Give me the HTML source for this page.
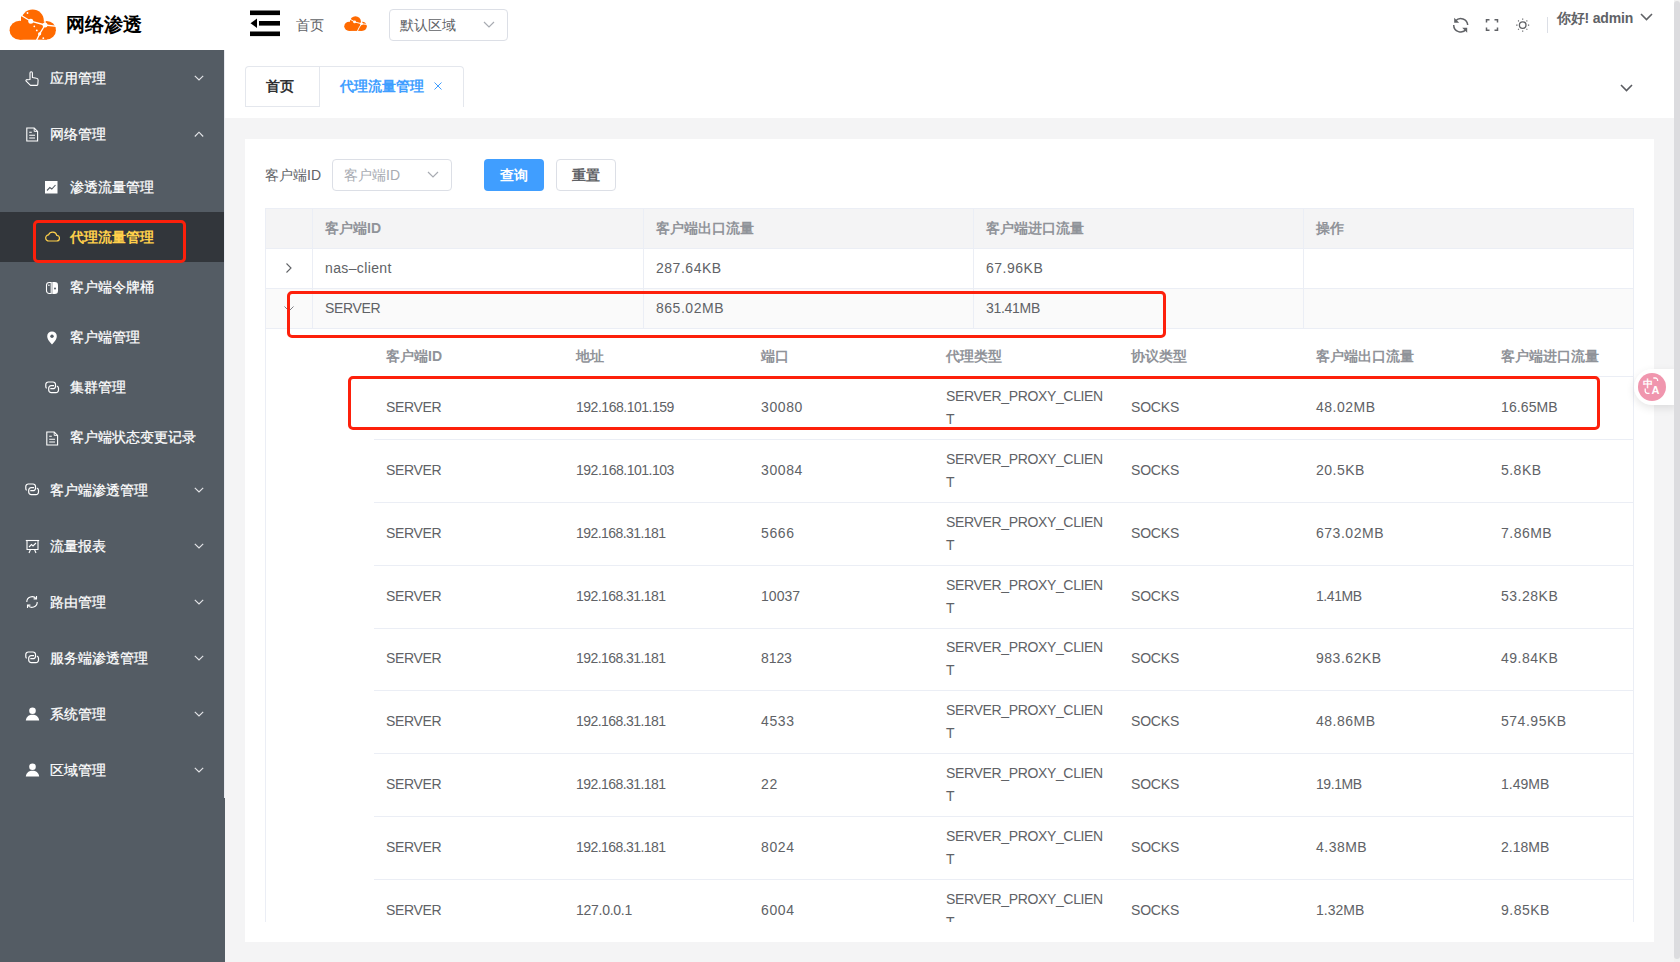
<!DOCTYPE html>
<html><head><meta charset="utf-8">
<style>
*{box-sizing:border-box;margin:0;padding:0}
html,body{width:1680px;height:962px;overflow:hidden;background:#fff}
body{position:relative;font-family:"Liberation Sans",sans-serif;font-size:14px;color:#606266}
.a{position:absolute}
.t{position:absolute;white-space:nowrap;line-height:23px}
/* header */
#hdr{left:0;top:0;width:1680px;height:50px;background:#fff}
#logo-t{left:66px;top:13px;font-size:18.5px;font-weight:bold;color:#000;line-height:24px}
/* sidebar */
#side{left:0;top:50px;width:225px;height:912px;background:#545c64}
#menu{left:0;top:50px;width:225px;height:748px;background:#545c64;border-right:1px solid #e8eaf0}
.mi{position:absolute;left:0;width:224px;color:#fff}
.mi .tx{position:absolute;left:50px;line-height:23px;white-space:nowrap}
.si .tx{left:70px}
.chev{position:absolute;left:193px;width:10px;height:6px}
#active{left:0;top:212px;width:224px;height:50px;background:#32363b}
/* content */
#main{left:225px;top:118px;width:1449px;height:844px;background:#f4f4f5}
#card{left:245px;top:139px;width:1409px;height:803px;background:#fff}
.tbl-line{position:absolute;background:#ebeef5}
.hd{font-weight:bold;color:#909399}
.redbox{position:absolute;border:3px solid #fd200b;border-radius:5px}
#sb{left:1674px;top:0;width:6px;height:962px;background:#f1f1f1}
#sbt{left:1674px;top:1px;width:6px;height:958px;background:#dcdcdf;border-radius:3px}
</style></head><body>
<div id="hdr" class="a"></div>
<!-- logo cloud -->
<svg class="a" style="left:5px;top:5px" width="56" height="40" viewBox="0 0 56 40">
  <g fill="#ff6a00">
    <ellipse cx="14.8" cy="25.2" rx="10.2" ry="9.5"/>
    <circle cx="27.6" cy="15.6" r="11.2"/>
    <circle cx="41.6" cy="25.2" r="9.3"/>
    <rect x="14.8" y="20" width="27" height="14.7"/>
    <path d="M16 10.5 L16 18 L22 18 Z"/>
  </g>
  <g stroke="#fff" stroke-width="1.3" fill="none">
    <path d="M15.5 10 L25.8 16.2 L40 20 L52 21.4"/>
    <path d="M40 20 L40 12"/>
    <path d="M40 20 L34.8 28.6 L31.2 36"/>
  </g>
  <g fill="#fff">
    <circle cx="25.8" cy="16.2" r="2.5"/><circle cx="40" cy="20" r="2.5"/><circle cx="34.6" cy="28.8" r="1.6"/>
    <circle cx="22.5" cy="8" r="0.9"/><circle cx="29.3" cy="21.3" r="0.9"/><circle cx="31.8" cy="25.4" r="0.9"/><circle cx="38.3" cy="33.2" r="0.9"/>
  </g>
</svg>
<div id="logo-t" class="t">网络渗透</div>

<!-- hamburger -->
<svg class="a" style="left:250px;top:10px" width="31" height="27" viewBox="0 0 31 27">
  <rect x="0" y="0.5" width="30" height="4.6" fill="#000"/>
  <rect x="0" y="21.5" width="30" height="4.6" fill="#000"/>
  <rect x="9" y="11" width="21" height="4.6" fill="#000"/>
  <path d="M0.5 13.3 L7 8.5 L7 18 Z" fill="#000"/>
</svg>
<div class="t" style="left:296px;top:13.5px;color:#606266">首页</div>
<!-- small cloud -->
<svg class="a" style="left:341.7px;top:13.5px" width="27.3" height="19.5" viewBox="0 0 56 40">
  <g fill="#ff6a00">
    <ellipse cx="14.8" cy="25.2" rx="10.2" ry="9.5"/>
    <circle cx="27.6" cy="15.6" r="11.2"/>
    <circle cx="41.6" cy="25.2" r="9.3"/>
    <rect x="14.8" y="20" width="27" height="14.7"/>
  </g>
  <g stroke="#fff" stroke-width="2" fill="none">
    <path d="M15.5 10 L25.8 16.2 L40 20 L52 21.4"/><path d="M40 20 L40 12"/><path d="M40 20 L34.8 28.6 L31.2 36"/>
  </g>
  <g fill="#fff"><circle cx="25.8" cy="16.2" r="3"/><circle cx="40" cy="20" r="3"/></g>
</svg>
<!-- region select -->
<div class="a" style="left:389px;top:9px;width:119px;height:32px;border:1px solid #dcdfe6;border-radius:4px"></div>
<div class="t" style="left:400px;top:13.5px;color:#606266">默认区域</div>
<svg class="a" style="left:483px;top:21px" width="12" height="8" viewBox="0 0 12 8"><path d="M1 1 L6 6 L11 1" stroke="#a8abb2" stroke-width="1.2" fill="none"/></svg>

<!-- header right -->
<svg class="a" style="left:1452px;top:17px" width="17" height="17" viewBox="0 0 17 17">
  <g fill="none" stroke="#606266" stroke-width="1.5"><path d="M3.6 3.8 A7 7 0 0 1 15.7 8"/><path d="M1.7 8 A7 7 0 0 0 14.2 12.3"/></g>
  <path d="M2.2 0.8 V5.8 H7.2 Z" fill="#606266"/><path d="M15.2 15.8 V10.8 H10.2 Z" fill="#606266"/>
</svg>
<svg class="a" style="left:1485px;top:18px" width="14" height="14" viewBox="0 0 14 14" fill="none" stroke="#606266" stroke-width="1.5">
  <path d="M1.5 4.5 V1.8 H4.5"/><path d="M9.5 1.8 H12.5 V4.5"/><path d="M12.5 9.5 V12.2 H9.5"/><path d="M4.5 12.2 H1.5 V9.5"/>
</svg>
<svg class="a" style="left:1515px;top:18px" width="15" height="15" viewBox="0 0 15 15" fill="none" stroke="#606266">
  <circle cx="7.7" cy="7.1" r="3.3" stroke-width="1.3"/>
  <g stroke-width="1.1"><path d="M7.7 0.5 V1.8 M7.7 12.4 V13.7 M1.2 7.1 H2.5 M12.9 7.1 H14.2 M3.1 2.5 L3.9 3.3 M11.5 10.9 L12.3 11.7 M3.1 11.7 L3.9 10.9 M11.5 3.3 L12.3 2.5"/></g>
</svg>
<div class="a" style="left:1547px;top:17px;width:1px;height:16px;background:#dcdfe6"></div>
<div class="t" style="left:1557px;top:7px;font-weight:bold;color:#606266;font-size:14px;letter-spacing:-0.2px">你好! admin</div>
<svg class="a" style="left:1640px;top:13px" width="13" height="8" viewBox="0 0 13 8"><path d="M1 1 L6.5 6.5 L12 1" stroke="#606266" stroke-width="1.6" fill="none"/></svg>

<!-- sidebar -->
<div id="side" class="a"></div>
<div id="menu" class="a"></div>
<div id="active" class="a"></div>
<svg class="a" style="left:25px;top:71px" width="15" height="15" viewBox="0 0 15 15" fill="none" stroke="#fff" stroke-width="1.1" stroke-linejoin="round"><path d="M5 8.5 V2 a1.2 1.2 0 0 1 2.4 0 V6.5 L11.5 7.3 a1.8 1.8 0 0 1 1.6 1.9 L12.8 13.5 a0.9 0.9 0 0 1 -0.9 0.9 H5.5 L1.2 10.2 a1 1 0 0 1 1.4 -1.4 Z"/></svg>
<div class="t" style="left:50px;top:66.5px;color:#fff;-webkit-text-stroke:0.25px #fff">应用管理</div>
<svg class="a" style="left:193.5px;top:75px" width="10" height="7" viewBox="0 0 10 7"><path d="M0.8 0.8 L5 5 L9.2 0.8" stroke="#e4e5e8" stroke-width="1.15" fill="none"/></svg>
<svg class="a" style="left:25px;top:127px" width="15" height="15" viewBox="0 0 15 15" fill="none" stroke="#fff" stroke-width="1.1"><path d="M1.8 1 H9.2 L12.6 4.4 V14 H1.8 Z"/><path d="M9.2 1 V4.4 H12.6" stroke-width="0.9"/><path d="M4.2 5.3 H6.8 M4.2 8.2 H10 M4.2 11 H10"/></svg>
<div class="t" style="left:50px;top:122.5px;color:#fff;-webkit-text-stroke:0.25px #fff">网络管理</div>
<svg class="a" style="left:193.5px;top:131px" width="10" height="7" viewBox="0 0 10 7"><path d="M0.8 5.5 L5 1.2 L9.2 5.5" stroke="#e4e5e8" stroke-width="1.15" fill="none"/></svg>
<svg class="a" style="left:45px;top:181px" width="13" height="13" viewBox="0 0 13 13"><rect x="0" y="0" width="12.5" height="12.5" fill="#fff"/><path d="M2 9.5 L4.8 6.5 L6.8 8 L10.5 4" stroke="#545c64" stroke-width="1.1" fill="none"/></svg>
<div class="t" style="left:70px;top:175.5px;color:#fff;-webkit-text-stroke:0.25px #fff;">渗透流量管理</div>
<svg class="a" style="left:45px;top:230px" width="15" height="12" viewBox="0 0 15 12" fill="none" stroke="#ffd04b" stroke-width="1.2"><path d="M4 11 H11.5 A2.8 2.8 0 0 0 11.8 5.4 A4.3 4.3 0 0 0 3.6 4.8 A3.1 3.1 0 0 0 4 11 Z"/></svg>
<div class="t" style="left:70px;top:225.5px;color:#ffd04b;font-weight:bold;">代理流量管理</div>
<svg class="a" style="left:45px;top:281px" width="14" height="14" viewBox="0 0 14 14"><path d="M6.2 1.5 H4.3 A2.8 2.8 0 0 0 1.5 4.3 V9.7 A2.8 2.8 0 0 0 4.3 12.5 H6.2 Z" fill="none" stroke="#fff" stroke-width="1.1"/><path d="M7.3 1 H9.7 A3.3 3.3 0 0 1 13 4.3 V9.7 A3.3 3.3 0 0 1 9.7 13 H7.3 Z" fill="#fff"/><circle cx="3.9" cy="4.3" r="0.8" fill="#fff"/><circle cx="10" cy="7.6" r="1" fill="#545c64"/></svg>
<div class="t" style="left:70px;top:275.5px;color:#fff;-webkit-text-stroke:0.25px #fff;">客户端令牌桶</div>
<svg class="a" style="left:45px;top:331px" width="14" height="14" viewBox="0 0 14 14"><path d="M7 13.6 C3.6 9.8 2.2 7.6 2.2 5.2 A4.8 4.8 0 0 1 11.8 5.2 C11.8 7.6 10.4 9.8 7 13.6 Z" fill="#fff"/><circle cx="7" cy="5.3" r="1.7" fill="#545c64"/></svg>
<div class="t" style="left:70px;top:325.5px;color:#fff;-webkit-text-stroke:0.25px #fff;">客户端管理</div>
<svg class="a" style="left:45px;top:381.3px" width="15" height="13" viewBox="0 0 15 13" fill="none" stroke="#fff" stroke-width="1.2"><path d="M1.6 7.4 A2.5 2.5 0 0 1 0.8 5.5 V3.5 A2.5 2.5 0 0 1 3.3 1 H8 A2.5 2.5 0 0 1 10.5 3.5 V5.2 A2.5 2.5 0 0 1 8 7.7 H5.3"/><path d="M11.8 5 A2.5 2.5 0 0 1 13.5 7.3 V9.1 A2.5 2.5 0 0 1 11 11.6 H6.2 A2.5 2.5 0 0 1 3.7 9.1 V7.2 A2.5 2.5 0 0 1 6.2 4.7 H9"/></svg>
<div class="t" style="left:70px;top:375.5px;color:#fff;-webkit-text-stroke:0.25px #fff;">集群管理</div>
<svg class="a" style="left:45px;top:431px" width="15" height="15" viewBox="0 0 15 15" fill="none" stroke="#fff" stroke-width="1.1"><path d="M1.8 1 H9.2 L12.6 4.4 V14 H1.8 Z"/><path d="M9.2 1 V4.4 H12.6" stroke-width="0.9"/><path d="M4.2 5.3 H6.8 M4.2 8.2 H10 M4.2 11 H10"/></svg>
<div class="t" style="left:70px;top:425.5px;color:#fff;-webkit-text-stroke:0.25px #fff;">客户端状态变更记录</div>
<svg class="a" style="left:25px;top:483.3px" width="15" height="13" viewBox="0 0 15 13" fill="none" stroke="#fff" stroke-width="1.2"><path d="M1.6 7.4 A2.5 2.5 0 0 1 0.8 5.5 V3.5 A2.5 2.5 0 0 1 3.3 1 H8 A2.5 2.5 0 0 1 10.5 3.5 V5.2 A2.5 2.5 0 0 1 8 7.7 H5.3"/><path d="M11.8 5 A2.5 2.5 0 0 1 13.5 7.3 V9.1 A2.5 2.5 0 0 1 11 11.6 H6.2 A2.5 2.5 0 0 1 3.7 9.1 V7.2 A2.5 2.5 0 0 1 6.2 4.7 H9"/></svg>
<div class="t" style="left:50px;top:478.5px;color:#fff;-webkit-text-stroke:0.25px #fff">客户端渗透管理</div>
<svg class="a" style="left:193.5px;top:487px" width="10" height="7" viewBox="0 0 10 7"><path d="M0.8 0.8 L5 5 L9.2 0.8" stroke="#e4e5e8" stroke-width="1.15" fill="none"/></svg>
<svg class="a" style="left:25px;top:539px" width="15" height="15" viewBox="0 0 15 15" fill="none" stroke="#fff" stroke-width="1.1"><path d="M0.8 1.5 H14.2"/><path d="M2 1.5 V10.5 H13 V1.5"/><path d="M4 8 L6.5 5.5 L8 7 L11 4"/><path d="M5.5 10.5 L4 14 M9.5 10.5 L11 14"/></svg>
<div class="t" style="left:50px;top:534.5px;color:#fff;-webkit-text-stroke:0.25px #fff">流量报表</div>
<svg class="a" style="left:193.5px;top:543px" width="10" height="7" viewBox="0 0 10 7"><path d="M0.8 0.8 L5 5 L9.2 0.8" stroke="#e4e5e8" stroke-width="1.15" fill="none"/></svg>
<svg class="a" style="left:25px;top:595px" width="14" height="14" viewBox="0 0 14 14" fill="none" stroke="#fff" stroke-width="1.1"><path d="M1.8 7 A5.2 5.2 0 0 1 11.2 3.8"/><path d="M12.2 7 A5.2 5.2 0 0 1 2.8 10.2"/><path d="M11.5 1 V3.9 H8.6"/><path d="M2.5 13 V10.1 H5.4"/></svg>
<div class="t" style="left:50px;top:590.5px;color:#fff;-webkit-text-stroke:0.25px #fff">路由管理</div>
<svg class="a" style="left:193.5px;top:599px" width="10" height="7" viewBox="0 0 10 7"><path d="M0.8 0.8 L5 5 L9.2 0.8" stroke="#e4e5e8" stroke-width="1.15" fill="none"/></svg>
<svg class="a" style="left:25px;top:651.3px" width="15" height="13" viewBox="0 0 15 13" fill="none" stroke="#fff" stroke-width="1.2"><path d="M1.6 7.4 A2.5 2.5 0 0 1 0.8 5.5 V3.5 A2.5 2.5 0 0 1 3.3 1 H8 A2.5 2.5 0 0 1 10.5 3.5 V5.2 A2.5 2.5 0 0 1 8 7.7 H5.3"/><path d="M11.8 5 A2.5 2.5 0 0 1 13.5 7.3 V9.1 A2.5 2.5 0 0 1 11 11.6 H6.2 A2.5 2.5 0 0 1 3.7 9.1 V7.2 A2.5 2.5 0 0 1 6.2 4.7 H9"/></svg>
<div class="t" style="left:50px;top:646.5px;color:#fff;-webkit-text-stroke:0.25px #fff">服务端渗透管理</div>
<svg class="a" style="left:193.5px;top:655px" width="10" height="7" viewBox="0 0 10 7"><path d="M0.8 0.8 L5 5 L9.2 0.8" stroke="#e4e5e8" stroke-width="1.15" fill="none"/></svg>
<svg class="a" style="left:25px;top:707px" width="15" height="14" viewBox="0 0 15 14"><circle cx="7.5" cy="3.8" r="3.3" fill="#fff"/><path d="M0.8 13.5 C1.5 9.5 4 7.8 7.5 7.8 C11 7.8 13.5 9.5 14.2 13.5 Z" fill="#fff"/></svg>
<div class="t" style="left:50px;top:702.5px;color:#fff;-webkit-text-stroke:0.25px #fff">系统管理</div>
<svg class="a" style="left:193.5px;top:711px" width="10" height="7" viewBox="0 0 10 7"><path d="M0.8 0.8 L5 5 L9.2 0.8" stroke="#e4e5e8" stroke-width="1.15" fill="none"/></svg>
<svg class="a" style="left:25px;top:763px" width="15" height="14" viewBox="0 0 15 14"><circle cx="7.5" cy="3.8" r="3.3" fill="#fff"/><path d="M0.8 13.5 C1.5 9.5 4 7.8 7.5 7.8 C11 7.8 13.5 9.5 14.2 13.5 Z" fill="#fff"/></svg>
<div class="t" style="left:50px;top:758.5px;color:#fff;-webkit-text-stroke:0.25px #fff">区域管理</div>
<svg class="a" style="left:193.5px;top:767px" width="10" height="7" viewBox="0 0 10 7"><path d="M0.8 0.8 L5 5 L9.2 0.8" stroke="#e4e5e8" stroke-width="1.15" fill="none"/></svg>
<div class="redbox" style="left:33px;top:220px;width:153px;height:43px"></div>

<!-- tabs -->
<div class="a" style="left:245px;top:66px;width:219px;height:41px;border:1px solid #e4e7ed;border-bottom:none;border-radius:4px 4px 0 0"></div>
<div class="a" style="left:245px;top:106px;width:75px;height:1px;background:#e4e7ed"></div>
<div class="a" style="left:319px;top:66px;width:1px;height:41px;background:#e4e7ed"></div>
<div class="t" style="left:266px;top:75px;color:#303133;font-weight:bold">首页</div>
<div class="t" style="left:340px;top:75px;color:#409eff;font-weight:bold">代理流量管理</div>
<svg class="a" style="left:433px;top:81px" width="10" height="10" viewBox="0 0 10 10"><path d="M1.5 1.5 L8.5 8.5 M8.5 1.5 L1.5 8.5" stroke="#409eff" stroke-width="1"/></svg>
<svg class="a" style="left:1620px;top:84px" width="13" height="8" viewBox="0 0 13 8"><path d="M1 1 L6.5 6.5 L12 1" stroke="#5a5c61" stroke-width="1.6" fill="none"/></svg>

<div id="main" class="a"></div>
<div id="card" class="a"></div>
<div class="t" style="left:265px;top:164px;color:#606266">客户端ID</div>
<div class="a" style="left:332px;top:159px;width:120px;height:32px;border:1px solid #dcdfe6;border-radius:4px"></div>
<div class="t" style="left:344px;top:164px;color:#a8abb2">客户端ID</div>
<svg class="a" style="left:427px;top:171px" width="12" height="8" viewBox="0 0 12 8"><path d="M1 1 L6 6 L11 1" stroke="#a8abb2" stroke-width="1.2" fill="none"/></svg>
<div class="a" style="left:484px;top:159px;width:60px;height:32px;background:#409eff;border-radius:4px"></div>
<div class="t" style="left:500px;top:164px;color:#fff;font-weight:bold">查询</div>
<div class="a" style="left:556px;top:159px;width:60px;height:32px;border:1px solid #dcdfe6;border-radius:4px"></div>
<div class="t" style="left:572px;top:164px;color:#606266;font-weight:bold">重置</div>
<div class="a" style="left:265px;top:208px;width:1368px;height:40px;background:#f4f4f5"></div>
<div class="a" style="left:265px;top:288px;width:1368px;height:40px;background:#fafafa"></div>
<div class="tbl-line" style="left:265px;top:208px;width:1368px;height:1px;background:#ebeef5"></div>
<div class="tbl-line" style="left:265px;top:248px;width:1368px;height:1px;background:#ebeef5"></div>
<div class="tbl-line" style="left:265px;top:288px;width:1368px;height:1px;background:#ebeef5"></div>
<div class="tbl-line" style="left:265px;top:328px;width:1368px;height:1px;background:#ebeef5"></div>
<div class="tbl-line" style="left:312px;top:208px;width:1px;height:120px;background:#ebeef5"></div>
<div class="tbl-line" style="left:643px;top:208px;width:1px;height:120px;background:#ebeef5"></div>
<div class="tbl-line" style="left:973px;top:208px;width:1px;height:120px;background:#ebeef5"></div>
<div class="tbl-line" style="left:1303px;top:208px;width:1px;height:120px;background:#ebeef5"></div>
<div class="tbl-line" style="left:265px;top:208px;width:1px;height:714px;background:#ebeef5"></div>
<div class="tbl-line" style="left:1633px;top:208px;width:1px;height:714px;background:#ebeef5"></div>
<div class="t hd" style="left:325px;top:216.5px">客户端ID</div>
<div class="t hd" style="left:656px;top:216.5px">客户端出口流量</div>
<div class="t hd" style="left:986px;top:216.5px">客户端进口流量</div>
<div class="t hd" style="left:1316px;top:216.5px">操作</div>
<div class="t" style="left:325px;top:257px;letter-spacing:0.376px;">nas–client</div>
<div class="t" style="left:656px;top:257px;letter-spacing:0.525px;">287.64KB</div>
<div class="t" style="left:986px;top:257px;letter-spacing:0.513px;">67.96KB</div>
<div class="t" style="left:325px;top:297px;letter-spacing:-0.342px;">SERVER</div>
<div class="t" style="left:656px;top:297px;letter-spacing:0.522px;">865.02MB</div>
<div class="t" style="left:986px;top:297px;letter-spacing:-0.291px;">31.41MB</div>
<svg class="a" style="left:285px;top:262px" width="8" height="12" viewBox="0 0 8 12"><path d="M1.5 1.5 L6 6 L1.5 10.5" stroke="#606266" stroke-width="1.1" fill="none"/></svg>
<svg class="a" style="left:283px;top:304.5px" width="12" height="8" viewBox="0 0 12 8"><path d="M1.5 1.5 L6 6 L10.5 1.5" stroke="#7d7f84" stroke-width="1" fill="none"/></svg>
<div class="t hd" style="left:386px;top:344.5px">客户端ID</div>
<div class="t hd" style="left:576px;top:344.5px">地址</div>
<div class="t hd" style="left:761px;top:344.5px">端口</div>
<div class="t hd" style="left:946px;top:344.5px">代理类型</div>
<div class="t hd" style="left:1131px;top:344.5px">协议类型</div>
<div class="t hd" style="left:1316px;top:344.5px">客户端出口流量</div>
<div class="t hd" style="left:1501px;top:344.5px">客户端进口流量</div>
<div class="a" style="left:266px;top:328px;width:1367px;height:594px;overflow:hidden">
<div class="t" style="left:120px;top:68px;letter-spacing:-0.342px;">SERVER</div>
<div class="t" style="left:310px;top:68px;letter-spacing:-0.480px;">192.168.101.159</div>
<div class="t" style="left:495px;top:68px;letter-spacing:0.614px;">30080</div>
<div class="t" style="left:680px;top:57px;letter-spacing:-0.349px;">SERVER_PROXY_CLIEN<br>T</div>
<div class="t" style="left:865px;top:68px;letter-spacing:-0.185px;">SOCKS</div>
<div class="t" style="left:1050px;top:68px;letter-spacing:0.509px;">48.02MB</div>
<div class="t" style="left:1235px;top:68px;letter-spacing:0.109px;">16.65MB</div>
<div class="t" style="left:120px;top:131px;letter-spacing:-0.342px;">SERVER</div>
<div class="t" style="left:310px;top:131px;letter-spacing:-0.480px;">192.168.101.103</div>
<div class="t" style="left:495px;top:131px;letter-spacing:0.614px;">30084</div>
<div class="t" style="left:680px;top:120px;letter-spacing:-0.349px;">SERVER_PROXY_CLIEN<br>T</div>
<div class="t" style="left:865px;top:131px;letter-spacing:-0.185px;">SOCKS</div>
<div class="t" style="left:1050px;top:131px;letter-spacing:0.496px;">20.5KB</div>
<div class="t" style="left:1235px;top:131px;letter-spacing:0.472px;">5.8KB</div>
<div class="t" style="left:120px;top:194px;letter-spacing:-0.342px;">SERVER</div>
<div class="t" style="left:310px;top:194px;letter-spacing:-0.558px;">192.168.31.181</div>
<div class="t" style="left:495px;top:194px;letter-spacing:0.614px;">5666</div>
<div class="t" style="left:680px;top:183px;letter-spacing:-0.349px;">SERVER_PROXY_CLIEN<br>T</div>
<div class="t" style="left:865px;top:194px;letter-spacing:-0.185px;">SOCKS</div>
<div class="t" style="left:1050px;top:194px;letter-spacing:0.522px;">673.02MB</div>
<div class="t" style="left:1235px;top:194px;letter-spacing:0.492px;">7.86MB</div>
<div class="t" style="left:120px;top:257px;letter-spacing:-0.342px;">SERVER</div>
<div class="t" style="left:310px;top:257px;letter-spacing:-0.558px;">192.168.31.181</div>
<div class="t" style="left:495px;top:257px;letter-spacing:0.054px;">10037</div>
<div class="t" style="left:680px;top:246px;letter-spacing:-0.349px;">SERVER_PROXY_CLIEN<br>T</div>
<div class="t" style="left:865px;top:257px;letter-spacing:-0.185px;">SOCKS</div>
<div class="t" style="left:1050px;top:257px;letter-spacing:-0.441px;">1.41MB</div>
<div class="t" style="left:1235px;top:257px;letter-spacing:0.513px;">53.28KB</div>
<div class="t" style="left:120px;top:319px;letter-spacing:-0.342px;">SERVER</div>
<div class="t" style="left:310px;top:319px;letter-spacing:-0.558px;">192.168.31.181</div>
<div class="t" style="left:495px;top:319px;letter-spacing:-0.086px;">8123</div>
<div class="t" style="left:680px;top:308px;letter-spacing:-0.349px;">SERVER_PROXY_CLIEN<br>T</div>
<div class="t" style="left:865px;top:319px;letter-spacing:-0.185px;">SOCKS</div>
<div class="t" style="left:1050px;top:319px;letter-spacing:0.525px;">983.62KB</div>
<div class="t" style="left:1235px;top:319px;letter-spacing:0.513px;">49.84KB</div>
<div class="t" style="left:120px;top:382px;letter-spacing:-0.342px;">SERVER</div>
<div class="t" style="left:310px;top:382px;letter-spacing:-0.558px;">192.168.31.181</div>
<div class="t" style="left:495px;top:382px;letter-spacing:0.614px;">4533</div>
<div class="t" style="left:680px;top:371px;letter-spacing:-0.349px;">SERVER_PROXY_CLIEN<br>T</div>
<div class="t" style="left:865px;top:382px;letter-spacing:-0.185px;">SOCKS</div>
<div class="t" style="left:1050px;top:382px;letter-spacing:0.509px;">48.86MB</div>
<div class="t" style="left:1235px;top:382px;letter-spacing:0.525px;">574.95KB</div>
<div class="t" style="left:120px;top:445px;letter-spacing:-0.342px;">SERVER</div>
<div class="t" style="left:310px;top:445px;letter-spacing:-0.558px;">192.168.31.181</div>
<div class="t" style="left:495px;top:445px;letter-spacing:0.614px;">22</div>
<div class="t" style="left:680px;top:434px;letter-spacing:-0.349px;">SERVER_PROXY_CLIEN<br>T</div>
<div class="t" style="left:865px;top:445px;letter-spacing:-0.185px;">SOCKS</div>
<div class="t" style="left:1050px;top:445px;letter-spacing:-0.441px;">19.1MB</div>
<div class="t" style="left:1235px;top:445px;letter-spacing:0.025px;">1.49MB</div>
<div class="t" style="left:120px;top:508px;letter-spacing:-0.342px;">SERVER</div>
<div class="t" style="left:310px;top:508px;letter-spacing:-0.558px;">192.168.31.181</div>
<div class="t" style="left:495px;top:508px;letter-spacing:0.614px;">8024</div>
<div class="t" style="left:680px;top:497px;letter-spacing:-0.349px;">SERVER_PROXY_CLIEN<br>T</div>
<div class="t" style="left:865px;top:508px;letter-spacing:-0.185px;">SOCKS</div>
<div class="t" style="left:1050px;top:508px;letter-spacing:0.492px;">4.38MB</div>
<div class="t" style="left:1235px;top:508px;letter-spacing:0.025px;">2.18MB</div>
<div class="t" style="left:120px;top:571px;letter-spacing:-0.342px;">SERVER</div>
<div class="t" style="left:310px;top:571px;letter-spacing:-0.276px;">127.0.0.1</div>
<div class="t" style="left:495px;top:571px;letter-spacing:0.614px;">6004</div>
<div class="t" style="left:680px;top:560px;letter-spacing:-0.349px;">SERVER_PROXY_CLIEN<br>T</div>
<div class="t" style="left:865px;top:571px;letter-spacing:-0.185px;">SOCKS</div>
<div class="t" style="left:1050px;top:571px;letter-spacing:0.025px;">1.32MB</div>
<div class="t" style="left:1235px;top:571px;letter-spacing:0.496px;">9.85KB</div>
<div class="tbl-line" style="left:108px;top:48px;width:1259px;height:1px;background:#ebeef5"></div>
<div class="tbl-line" style="left:108px;top:111px;width:1259px;height:1px;background:#ebeef5"></div>
<div class="tbl-line" style="left:108px;top:174px;width:1259px;height:1px;background:#ebeef5"></div>
<div class="tbl-line" style="left:108px;top:237px;width:1259px;height:1px;background:#ebeef5"></div>
<div class="tbl-line" style="left:108px;top:300px;width:1259px;height:1px;background:#ebeef5"></div>
<div class="tbl-line" style="left:108px;top:362px;width:1259px;height:1px;background:#ebeef5"></div>
<div class="tbl-line" style="left:108px;top:425px;width:1259px;height:1px;background:#ebeef5"></div>
<div class="tbl-line" style="left:108px;top:488px;width:1259px;height:1px;background:#ebeef5"></div>
<div class="tbl-line" style="left:108px;top:551px;width:1259px;height:1px;background:#ebeef5"></div>
</div>
<div class="redbox" style="left:287px;top:291px;width:879px;height:47px"></div>
<div class="redbox" style="left:348px;top:376px;width:1252px;height:54px"></div>
<div class="a" style="left:1634px;top:368.5px;width:42px;height:36px;background:#fff;border-radius:18px 0 0 18px;box-shadow:0 3px 8px rgba(0,0,0,0.10)"></div>
<div class="a" style="left:1637.8px;top:372.5px;width:28px;height:28px;border-radius:14px;background:#f096ae"></div>
<div class="t" style="left:1643px;top:377.5px;font-size:10px;line-height:11px;color:#fff;font-weight:bold">中</div>
<div class="t" style="left:1651.5px;top:384px;font-size:11px;line-height:12px;color:#fff;font-weight:bold">A</div>
<svg class="a" style="left:1642px;top:376px" width="20" height="20" viewBox="0 0 20 20" fill="none" stroke="#fff" stroke-width="1.3"><path d="M11.3 2 H13.2 A2.3 2.3 0 0 1 15.6 4.3 V5"/><path d="M3.2 12.5 V14.7 A2.3 2.3 0 0 0 5.5 17.3 H7.5"/></svg>

<div id="sb" class="a"></div>
<div id="sbt" class="a"></div>
</body></html>
